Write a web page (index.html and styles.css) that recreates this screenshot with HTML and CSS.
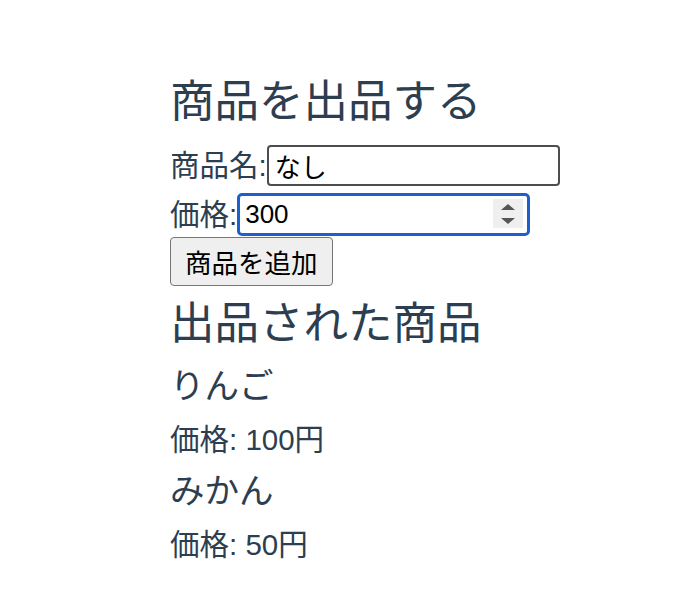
FILE: index.html
```html
<!DOCTYPE html>
<html lang="ja">
<head>
<meta charset="utf-8">
<title>商品を出品する</title>
<link rel="stylesheet" href="styles.css">
</head>
<body>
<div class="app">
  <h2 class="title">商品を出品する</h2>
  <div class="row row-name">
    <label class="label" for="name">商品名:</label>
    <input class="field" id="name" type="text" value="なし">
  </div>
  <div class="row row-price">
    <label class="label" for="price">価格:</label>
    <span class="num-wrap">
      <input class="field field-focus" id="price" type="number" value="300">
      <span class="spinner">
        <svg width="30" height="29" viewBox="0 0 30 29">
          <rect x="0" y="0" width="30" height="29" fill="#efefef"/>
          <polygon points="8,11 22,11 15,5" fill="#555"/>
          <polygon points="8,19 22,19 15,25" fill="#555"/>
        </svg>
      </span>
    </span>
  </div>
  <button class="btn" type="button">商品を追加</button>
  <h2 class="title title-list">出品された商品</h2>
  <h3 class="item-name first">りんご</h3>
  <p class="item-price">価格: 100円</p>
  <h3 class="item-name">みかん</h3>
  <p class="item-price">価格: 50円</p>
</div>
</body>
</html>
```
FILE: styles.css
```css
html, body {
  margin: 0;
  padding: 0;
  background: #ffffff;
}
body {
  font-family: "Liberation Sans", "Noto Sans CJK JP", sans-serif;
  font-size: 29.5px;
  color: #2c3e50;
}
.app {
  display: flex;
  flex-direction: column;
  align-items: flex-start;
  padding: 77px 0 0 170px;
}
.title {
  margin: 0 0 18px;
  font-size: 44.5px;
  font-weight: normal;
  line-height: 50px;
}
.title-list {
  margin: 13px 0 0;
}
.row {
  display: flex;
  align-items: center;
}
.label {
  line-height: 41px;
}
.field {
  box-sizing: border-box;
  width: 293px;
  height: 41px;
  margin: 0;
  padding: 0 6px;
  border: 2px solid #4d4d4d;
  border-radius: 4px;
  background: #fff;
  color: #000;
  font-family: "Liberation Sans", "Noto Sans CJK JP", sans-serif;
  font-size: 26px;
  outline: none;
}
.row-price {
  margin-top: 7px;
}
.num-wrap {
  position: relative;
  display: block;
}
.field-focus {
  height: 43px;
  border: 3px solid #1f5fcc;
  border-radius: 5px;
  padding: 0 5px;
  -moz-appearance: textfield;
}
.field-focus::-webkit-inner-spin-button,
.field-focus::-webkit-outer-spin-button {
  -webkit-appearance: none;
  margin: 0;
}
.spinner {
  position: absolute;
  top: 6px;
  right: 7px;
  display: block;
  line-height: 0;
}
.btn {
  box-sizing: border-box;
  margin-top: 1px;
  height: 49px;
  padding: 0 14px;
  border: 1.5px solid #767676;
  border-radius: 4px;
  background: #efefef;
  color: #000;
  font-family: "Liberation Sans", "Noto Sans CJK JP", sans-serif;
  font-size: 26.5px;
}
.item-name {
  margin: 14px 0 0;
  font-size: 34.5px;
  font-weight: normal;
  line-height: 40px;
}
.item-name.first {
  margin-top: 17px;
}
.item-price {
  margin: 17px 0 0;
  line-height: 34px;
}
```
